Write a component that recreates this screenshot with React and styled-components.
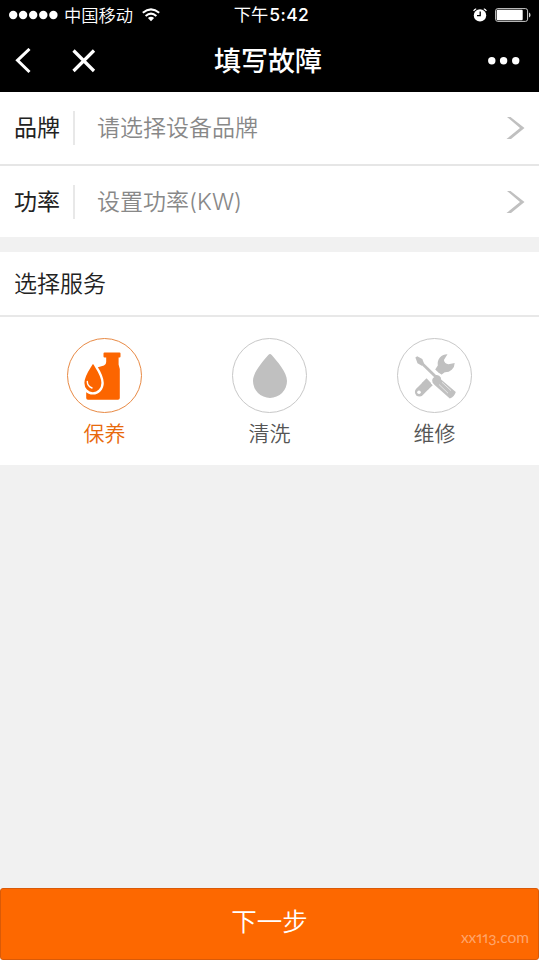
import React, { useState } from 'react';
import styled, { createGlobalStyle } from 'styled-components';

const fields = [
  { label: '品牌', placeholder: '请选择设备品牌' },
  { label: '功率', placeholder: '设置功率', unit: '(KW)' },
];

const MaintainIcon = () => (
  <svg width="74" height="74" viewBox="0 0 74 74">
    <path fill="currentColor" d="M37.5 13.5H52.5Q53.5 13.5 53.5 14.5V17.5Q53.5 18.5 52.5 18.5H51.6V25.5L52.8 30V59Q52.8 60.8 51 60.8H21Q19.2 60.8 19.2 59V48H30V28.5L37 26.5Q39.2 25.5 39.2 23V18.5H37.5Q36.5 18.5 36.5 17.5V14.5Q36.5 13.5 37.5 13.5Z" />
    <path fill="currentColor" stroke="#fff" strokeWidth="2.4" d="M24.5 25Q26 22.5 27.5 25C30.5 30 35.6 36.5 35.6 44A9.7 10.4 0 0 1 16.2 44C16.2 36.5 21.5 30 24.5 25Z" />
    <path fill="none" stroke="#fff" strokeWidth="1.4" strokeLinecap="round" d="M20.3 42.5Q20.3 47 25 49" />
  </svg>
);

const CleanIcon = () => (
  <svg width="74" height="74" viewBox="0 0 74 74">
    <path fill="currentColor" d="M36.3 16Q38 14.2 39.7 16C45 22.2 55 33.2 55 41.9A17 17 0 0 1 21 41.9C21 33.2 31 22.2 36.3 16Z" />
  </svg>
);

const RepairIcon = () => (
  <svg width="74" height="74" viewBox="0 0 74 74">
    <path fill="currentColor" d="M50.5 15.2L46.9 21Q47.6 24.8 51.5 25.3L57.7 23.9A9.5 9.5 0 0 1 47.8 33.3L44 36L38.2 30.4L40.8 26.5A9.5 9.5 0 0 1 50.5 15.2Z" />
    <path fill="none" stroke="currentColor" strokeWidth="9" strokeLinecap="round" d="M22.4 53L28 47.3" />
    <path fill="currentColor" d="M24.8 44.1L29.5 39.3L36 46L31.2 50.6Z" />
    <circle cx="22" cy="53.3" r="1.8" fill="#fff" />
    <path fill="#fff" d="M26 24L40.5 34.2Q46 34.2 46.3 40L60 52L51.5 61L34 44.5L33.5 38.5Z" />
    <path fill="none" stroke="currentColor" strokeWidth="2.8" d="M22 21.5L39 38" />
    <path fill="currentColor" d="M18.4 18.6L20.2 17.3L25.3 20L27 24.5L24.8 26.8L20.5 24.2Z" />
    <path fill="currentColor" d="M36 39Q37.8 38.5 38.8 36Q42.2 35.4 43.8 38.5L44.1 40.5L58.8 53Q57.5 57.5 52.8 59.6L37.6 46L35.6 43.8Q34.3 41 36 39Z" />
    <path fill="none" stroke="#fff" strokeWidth=".6" d="M42 45.5L51 54.2M45 43.3L54 51.6" />
  </svg>
);

const services = [
  { name: '保养', Icon: MaintainIcon },
  { name: '清洗', Icon: CleanIcon },
  { name: '维修', Icon: RepairIcon },
];

const App = () => {
  const [selected, setSelected] = useState(0);

  return (
    <Page>
      <GlobalStyle />
      <Header>
        <StatusBar>
          <Carrier>
            <svg width="50" height="10" viewBox="0 0 50 10" fill="#fff">
              {[5.2, 15.1, 25.2, 35.3, 45.4].map((cx) => <circle key={cx} cx={cx} cy="5" r="4.2" />)}
            </svg>
            <span>中国移动</span>
            <svg width="18" height="14" viewBox="0 0 18 14" fill="none" stroke="#fff">
              <path strokeWidth="2" d="M.8 4.8Q9-2 17.2 4.8M3.6 8Q9 3.3 14.4 8" />
              <path fill="#fff" stroke="none" d="M5.9 10Q9 7.3 12.1 10L9 13.3Z" />
            </svg>
          </Carrier>
          <Time>下午<Digits>5:42</Digits></Time>
          <StatusIcons>
            <svg width="14" height="14" viewBox="0 0 14 14">
              <circle cx="7" cy="7.4" r="6.2" fill="#fff" />
              <path fill="none" stroke="#fff" strokeWidth="1.3" d="M.7 3Q1.2 1.2 3.2.8M10.8.8Q12.8 1.2 13.3 3" />
              <path fill="none" stroke="#000" strokeWidth="1.3" d="M7.2 3.5V7.7H4" />
            </svg>
            <svg width="36" height="14" viewBox="0 0 36 14">
              <rect x=".6" y=".6" width="32" height="12.8" rx="2.2" fill="none" stroke="#ccc" />
              <rect x="1.7" y="1.7" width="26" height="10.6" rx="1" fill="#fff" />
              <path fill="#ccc" d="M34 4.5Q35.6 5.3 35.6 7T34 9.5Z" />
            </svg>
          </StatusIcons>
        </StatusBar>
        <NavBar>
          <NavActions>
            <svg width="16" height="26" viewBox="0 0 16 26" fill="none" stroke="#fff" strokeWidth="3">
              <path d="M14.5 1L2.5 12.3L14.5 24" />
            </svg>
            <svg width="24" height="24" viewBox="0 0 24 24" fill="none" stroke="#fff" strokeWidth="3.2">
              <path d="M1.5 1.5L22 22M22 1.5L1.5 22" />
            </svg>
          </NavActions>
          <Title>填写故障</Title>
          <More>
            <svg width="32" height="8" viewBox="0 0 32 8" fill="#fff">
              <circle cx="3.8" cy="3.7" r="3.7" />
              <circle cx="15.6" cy="3.7" r="3.7" />
              <circle cx="27.7" cy="3.7" r="3.7" />
            </svg>
          </More>
        </NavBar>
      </Header>

      <FieldList>
        {fields.map((field) => (
          <Field key={field.label}>
            <FieldLabel>{field.label}</FieldLabel>
            <Placeholder>{field.placeholder}{field.unit && <Unit>{field.unit}</Unit>}</Placeholder>
            <svg width="19" height="24" viewBox="0 0 19 24">
              <path fill="#c0c0c0" d="M1 1H4.5L18.5 12L5 23H.5L14 12Z" />
            </svg>
          </Field>
        ))}
      </FieldList>

      <ServicePanel>
        <SectionTitle>选择服务</SectionTitle>
        <ServiceList>
          {services.map(({ name, Icon }, i) => (
            <Service key={name} $active={i === selected} onClick={() => setSelected(i)}>
              <IconCircle $active={i === selected}><Icon /></IconCircle>
              {name}
            </Service>
          ))}
        </ServiceList>
      </ServicePanel>

      <NextButton>
        下一步
        <Watermark>xx113.com</Watermark>
      </NextButton>
    </Page>
  );
};

const GlobalStyle = createGlobalStyle`
  * {
    box-sizing: border-box;
  }
  body {
    margin: 0;
    background: #f1f1f1;
    font-family: "Noto Sans CJK SC", sans-serif;
  }
  svg {
    display: block;
    flex-shrink: 0;
  }
`;

const Page = styled.div`
  display: flex;
  flex-direction: column;
  height: 100vh;
  background: #f1f1f1;
`;

const Header = styled.header`
  height: 92px;
  background: #000;
  color: #fff;
`;

const StatusBar = styled.div`
  display: grid;
  grid-template-columns: 1fr auto 1fr;
  align-items: center;
  height: 30px;
  padding: 0 8px 1px;
  font-size: 17.3px;
  line-height: 28px;
`;

const Carrier = styled.div`
  display: flex;
  align-items: center;
  font-weight: 350;

  span {
    margin: 0 9px 0 6px;
  }
`;

const Time = styled.div`
  padding-left: 4px;
`;

const Digits = styled.span`
  margin-left: 1px;
  font-family: Inter, sans-serif;
  font-size: 17.5px;
  font-weight: 500;
  letter-spacing: 0.4px;
`;

const StatusIcons = styled.div`
  display: flex;
  justify-content: flex-end;
  gap: 8px;
`;

const NavBar = styled.nav`
  display: grid;
  grid-template-columns: 1fr auto 1fr;
  align-items: center;
  height: 62px;
  padding: 0 19px 0 15px;
`;

const NavActions = styled.div`
  display: flex;
  align-items: center;
  gap: 41px;
`;

const Title = styled.h1`
  margin: 0;
  padding: 0 0 2px 1px;
  font-size: 27px;
  font-weight: 500;
  line-height: 58px;
`;

const More = styled.div`
  display: flex;
  justify-content: flex-end;
`;

const FieldList = styled.div`
  height: 145px;
  background: #fff;
`;

const Field = styled.div`
  display: flex;
  align-items: center;
  height: 74px;
  padding: 0 14px;
  border-bottom: 2px solid #e6e6e6;

  &:last-child {
    height: 71px;
    border-bottom: 0;
  }
`;

const FieldLabel = styled.label`
  width: 61px;
  height: 34px;
  border-right: 2px solid #e8e8e8;
  color: #222;
  font-size: 23px;
  line-height: 31px;
`;

const Placeholder = styled.div`
  flex: 1;
  height: 34px;
  padding-left: 22px;
  color: #888;
  font-size: 23px;
  font-weight: 350;
  line-height: 31px;
`;

const Unit = styled.span`
  font-family: Inter, sans-serif;
  font-size: 23px;
  font-weight: 300;
`;

const ServicePanel = styled.section`
  height: 213px;
  margin-top: 15px;
  background: #fff;
`;

const SectionTitle = styled.h2`
  height: 65px;
  margin: 0;
  padding-left: 14px;
  border-bottom: 2px solid #e8e8e8;
  color: #222;
  font-size: 23px;
  font-weight: 350;
  line-height: 61px;
`;

const ServiceList = styled.div`
  display: flex;
  padding: 21px 22px 0;
`;

const Service = styled.div`
  display: flex;
  flex: 1;
  flex-direction: column;
  align-items: center;
  color: ${(props) => (props.$active ? '#e8690b' : '#555')};
  font-size: 21px;
  font-weight: 350;
  line-height: 38px;
  cursor: pointer;
`;

const IconCircle = styled.div`
  display: flex;
  align-items: center;
  justify-content: center;
  width: 75px;
  height: 75px;
  margin-right: 1px;
  border: 1px solid ${(props) => (props.$active ? '#e88a45' : '#c8c8c8')};
  border-radius: 50%;
  color: ${(props) => (props.$active ? '#fc6500' : '#c0c0c0')};
`;

const NextButton = styled.button`
  position: relative;
  height: 72px;
  margin-top: auto;
  padding: 0 0 8px;
  border: 1px solid #d95a08;
  border-radius: 3px;
  background: #fd6800;
  color: #fff;
  font-family: inherit;
  font-size: 25.5px;
  font-weight: 350;
  line-height: 60px;
`;

const Watermark = styled.span`
  position: absolute;
  right: 9px;
  bottom: 12px;
  color: #ffa56b;
  font-family: Lato, sans-serif;
  font-size: 15.5px;
  font-variant-numeric: oldstyle-nums proportional-nums;
  font-weight: 400;
  line-height: 20px;
`;

export default App;
